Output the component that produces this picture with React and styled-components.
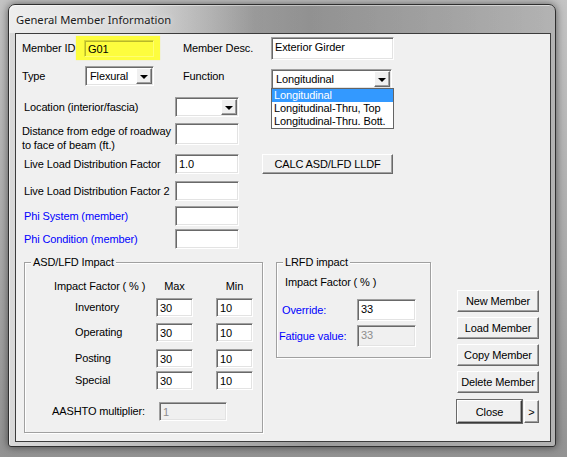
import React from "react";
import styled, { createGlobalStyle } from "styled-components";

const GlobalStyle = createGlobalStyle`
  html, body {
    margin: 0;
    padding: 0;
  }
  body {
    width: 567px;
    height: 457px;
    overflow: hidden;
    background: linear-gradient(to bottom, #c4c4c4 0%, #a9a9a9 60%, #939393 100%);
    font-family: "Liberation Sans", Arial, sans-serif;
    font-size: 11px;
    letter-spacing: -0.12px;
    color: #000;
  }
`;

const Screen = styled.div`
  padding: 4px 0 0 8px;
`;

const Window = styled.div`
  box-sizing: border-box;
  width: 548px;
  height: 443px;
  border: 1px solid #2f2f2f;
  border-radius: 7px 7px 3px 3px;
  background: linear-gradient(to right, #d9d9d9 0%, #bdbdbd 25%, #9b9b9b 55%, #a7a7a7 80%, #b3b3b3 100%);
  box-shadow: 0 0 9px rgba(0, 0, 0, 0.55), inset 1px 1px 0 rgba(255, 255, 255, 0.5);
  display: flex;
  flex-direction: column;
`;

const TitleBar = styled.div`
  height: 28px;
  flex: none;
  display: flex;
  align-items: center;
  padding-left: 7px;
  background: linear-gradient(to right, rgba(255, 255, 255, 0.55) 0%, rgba(255, 255, 255, 0.35) 25%, rgba(0, 0, 0, 0.08) 45%, rgba(0, 0, 0, 0) 100%);
  border-radius: 6px 6px 0 0;
`;

const Title = styled.span`
  font-family: "Noto Sans", "Open Sans", sans-serif;
  font-size: 11.2px;
  letter-spacing: 0;
  color: #1b1b1b;
  text-shadow: 0 0 6px rgba(255, 255, 255, 0.9);
  padding-top: 1px;
`;

const Client = styled.div`
  box-sizing: border-box;
  flex: none;
  margin: 0 4px 0 6px;
  height: 409px;
  border: 1px solid #3c3c3c;
  background: #f0f0f0;
  padding: 2px 0 0 6px;
`;

const Row = styled.div`
  display: flex;
  align-items: flex-start;
  margin-top: ${(p) => p.$mt || 0}px;
  height: ${(p) => p.$h}px;
`;

const Label = styled.div`
  box-sizing: border-box;
  flex: none;
  width: ${(p) => p.$w}px;
  height: ${(p) => p.$h || 20}px;
  line-height: ${(p) => p.$lh || p.$h || 20}px;
  margin-left: ${(p) => p.$ml || 0}px;
  padding-left: ${(p) => p.$pl || 0}px;
  padding-top: ${(p) => p.$pt || 0}px;
  color: ${(p) => (p.$blue ? "#0000ff" : "#000")};
  white-space: nowrap;
`;

const Edit = styled.div`
  box-sizing: border-box;
  flex: none;
  width: ${(p) => (p.$w ? `${p.$w}px` : "100%")};
  height: ${(p) => (p.$h ? `${p.$h}px` : "100%")};
  margin-top: ${(p) => p.$mt || 0}px;
  border: 1px solid;
  border-color: #a0a0a0 #ffffff #ffffff #a0a0a0;
  box-shadow: inset 1px 1px 0 #696969, inset -1px -1px 0 #e3e3e3;
  background: ${(p) => (p.$disabled ? "#f0f0f0" : p.$clear ? "transparent" : "#fff")};
  color: ${(p) => (p.$disabled ? "#8d8d8d" : "#000")};
  padding: 2px 0 0 3px;
  line-height: 14px;
  white-space: nowrap;
  overflow: hidden;
`;

const Highlight = styled.div`
  box-sizing: border-box;
  flex: none;
  width: 84px;
  height: 24px;
  padding: 4px 6px 3px 8px;
  background: #fdfd3e;
  box-shadow: 0 0 1px #f4f47a;

  ${Edit} {
    border-color: #d7d733 #ffff70 #ffff70 #d7d733;
    box-shadow: inset 1px 1px 0 #b9b929;
    padding-top: 1px;
  }
`;

const SelectBox = styled.div`
  position: relative;
  box-sizing: border-box;
  flex: none;
  width: ${(p) => p.$w}px;
  height: 20px;
  margin-top: ${(p) => p.$mt || 0}px;
  border: 1px solid;
  border-color: #a0a0a0 #ffffff #ffffff #a0a0a0;
  box-shadow: inset 1px 1px 0 #696969, inset -1px -1px 0 #e3e3e3;
  background: #fff;
  display: flex;
  align-items: stretch;
  padding: 1px;
`;

const SelectText = styled.div`
  flex: 1;
  padding-left: 3px;
  line-height: 16px;
  white-space: nowrap;
  overflow: hidden;
`;

const DropButton = styled.div`
  box-sizing: border-box;
  width: 16px;
  flex: none;
  background: #f0f0f0;
  border: 1px solid;
  border-color: #ffffff #696969 #696969 #ffffff;
  box-shadow: inset -1px -1px 0 #a0a0a0;
  display: flex;
  align-items: center;
  justify-content: center;

  &::after {
    content: "";
    border-left: 4px solid transparent;
    border-right: 4px solid transparent;
    border-top: 4px solid #000;
    margin-top: 1px;
  }
`;

const DropList = styled.div`
  position: absolute;
  top: 100%;
  left: -1px;
  width: 123px;
  box-sizing: border-box;
  border: 1px solid #646464;
  background: #fff;
  z-index: 2;
`;

const DropItem = styled.div`
  height: 13px;
  line-height: 13px;
  padding-left: 2px;
  white-space: nowrap;
  background: ${(p) => (p.$active ? "#3399ff" : "transparent")};
  color: ${(p) => (p.$active ? "#fff" : "#000")};
`;

const Button = styled.div`
  box-sizing: border-box;
  flex: none;
  width: ${(p) => p.$w}px;
  height: ${(p) => p.$h}px;
  margin-left: ${(p) => p.$ml || 0}px;
  background: #f0f0f0;
  border: 1px solid;
  border-color: #ffffff ${(p) => (p.$default ? "#3a3a3a" : "#696969")} ${(p) =>
      p.$default ? "#3a3a3a" : "#696969"} #ffffff;
  box-shadow: inset -1px -1px 0 #a0a0a0${(p) => (p.$default ? ", 0 0 0 1px #6a6a6a" : "")};
  display: flex;
  align-items: center;
  justify-content: center;
  white-space: nowrap;
`;

const Bottom = styled.div`
  display: flex;
  align-items: flex-start;
  margin-top: 13px;
`;

const Group = styled.div`
  position: relative;
  box-sizing: border-box;
  flex: none;
  width: ${(p) => p.$w}px;
  height: ${(p) => p.$h}px;
  margin-left: ${(p) => p.$ml || 0}px;
  border: 1px solid #a0a0a0;
  box-shadow: inset 1px 1px 0 #fff, 1px 1px 0 #fff;
  padding-top: ${(p) => p.$pt}px;
`;

const Legend = styled.span`
  position: absolute;
  top: -7px;
  left: 6px;
  padding: 0 2px;
  line-height: 13px;
  background: #f0f0f0;
`;

const ImpactGrid = styled.div`
  display: grid;
  grid-template-columns: 131px 37px 23px 37px;
  grid-template-rows: 24px 25px 26px 22px;
  align-items: start;
`;

const HeadCell = styled.div`
  grid-column: ${(p) => p.$col};
  line-height: 24px;
  text-align: ${(p) => (p.$left ? "left" : "center")};
  padding-left: ${(p) => p.$pl || 0}px;
  white-space: nowrap;
`;

const Caption = styled.div`
  line-height: 13px;
  padding-left: 8px;
`;

const ButtonColumn = styled.div`
  display: flex;
  flex-direction: column;
  gap: 5px;
  margin: 28px 0 0 26px;
`;

const CloseRow = styled.div`
  display: flex;
  gap: 2px;
  margin-top: 2px;
`;

const impactRows = ["Inventory", "Operating", "Posting", "Special"];

export default function App() {
  return (
    <>
      <GlobalStyle />
      <Screen>
        <Window>
          <TitleBar>
            <Title>General Member Information</Title>
          </TitleBar>
          <Client>
            <Row $h={24}>
              <Label $w={54} $h={24}>Member ID</Label>
              <Highlight>
                <Edit $clear>G01</Edit>
              </Highlight>
              <Label $w={88} $h={24} $ml={23}>Member Desc.</Label>
              <Edit $w={123} $h={23} $mt={1}>Exterior Girder</Edit>
            </Row>

            <Row $h={23} $mt={6}>
              <Label $w={63}>Type</Label>
              <SelectBox $w={69}>
                <SelectText>Flexural</SelectText>
                <DropButton />
              </SelectBox>
              <Label $w={88} $ml={29}>Function</Label>
              <SelectBox $w={121} $mt={3}>
                <SelectText>Longitudinal</SelectText>
                <DropButton />
                <DropList>
                  <DropItem $active>Longitudinal</DropItem>
                  <DropItem>Longitudinal-Thru, Top</DropItem>
                  <DropItem>Longitudinal-Thru. Bott.</DropItem>
                </DropList>
              </SelectBox>
            </Row>

            <Row $h={20} $mt={8}>
              <Label $w={153} $pl={2}>Location (interior/fascia)</Label>
              <SelectBox $w={64}>
                <SelectText />
                <DropButton />
              </SelectBox>
            </Row>

            <Row $h={22} $mt={6}>
              <Label $w={153} $h={22} $lh={14} $pt={1}>
                Distance from edge of roadway
                <br />
                to face of beam (ft.)
              </Label>
              <Edit $w={64} $h={22} />
            </Row>

            <Row $h={20} $mt={9}>
              <Label $w={153} $pl={2}>Live Load Distribution Factor</Label>
              <Edit $w={64} $h={20}>1.0</Edit>
              <Button $w={131} $h={20} $ml={23}>CALC ASD/LFD LLDF</Button>
            </Row>

            <Row $h={20} $mt={7}>
              <Label $w={153} $pl={2}>Live Load Distribution Factor 2</Label>
              <Edit $w={64} $h={20} />
            </Row>

            <Row $h={20} $mt={5}>
              <Label $w={153} $pl={2} $blue>Phi System (member)</Label>
              <Edit $w={64} $h={20} />
            </Row>

            <Row $h={20} $mt={3}>
              <Label $w={153} $pl={2} $blue>Phi Condition (member)</Label>
              <Edit $w={64} $h={20} />
            </Row>

            <Bottom>
              <Group $w={239} $h={171} $ml={2} $pt={11}>
                <Legend>ASD/LFD Impact</Legend>
                <ImpactGrid>
                  <HeadCell $col={1} $left $pl={29}>Impact Factor ( % )</HeadCell>
                  <HeadCell $col={2}>Max</HeadCell>
                  <HeadCell $col={4}>Min</HeadCell>
                  {impactRows.map((name) => (
                    <React.Fragment key={name}>
                      <Label $w={131} $h={19} $pl={50}>{name}</Label>
                      <Edit $w={37} $h={19}>30</Edit>
                      <span />
                      <Edit $w={37} $h={19}>10</Edit>
                    </React.Fragment>
                  ))}
                </ImpactGrid>
                <Row $h={19} $mt={12}>
                  <Label $w={134} $h={19} $pl={27}>AASHTO multiplier:</Label>
                  <Edit $w={68} $h={19} $disabled>1</Edit>
                </Row>
              </Group>

              <Group $w={155} $h={96} $ml={13} $pt={13}>
                <Legend>LRFD impact</Legend>
                <Caption>Impact Factor ( % )</Caption>
                <Row $h={22} $mt={10}>
                  <Label $w={80} $h={22} $pl={5} $blue>Override:</Label>
                  <Edit $w={59} $h={22}>33</Edit>
                </Row>
                <Row $h={22} $mt={4}>
                  <Label $w={80} $h={22} $pl={2} $blue>Fatigue value:</Label>
                  <Edit $w={59} $h={22} $disabled>33</Edit>
                </Row>
              </Group>

              <ButtonColumn>
                <Button $w={82} $h={22}>New Member</Button>
                <Button $w={82} $h={22}>Load Member</Button>
                <Button $w={82} $h={22}>Copy Member</Button>
                <Button $w={82} $h={22}>Delete Member</Button>
                <CloseRow>
                  <Button $w={65} $h={23} $default>Close</Button>
                  <Button $w={15} $h={23}>&gt;</Button>
                </CloseRow>
              </ButtonColumn>
            </Bottom>
          </Client>
        </Window>
      </Screen>
    </>
  );
}
